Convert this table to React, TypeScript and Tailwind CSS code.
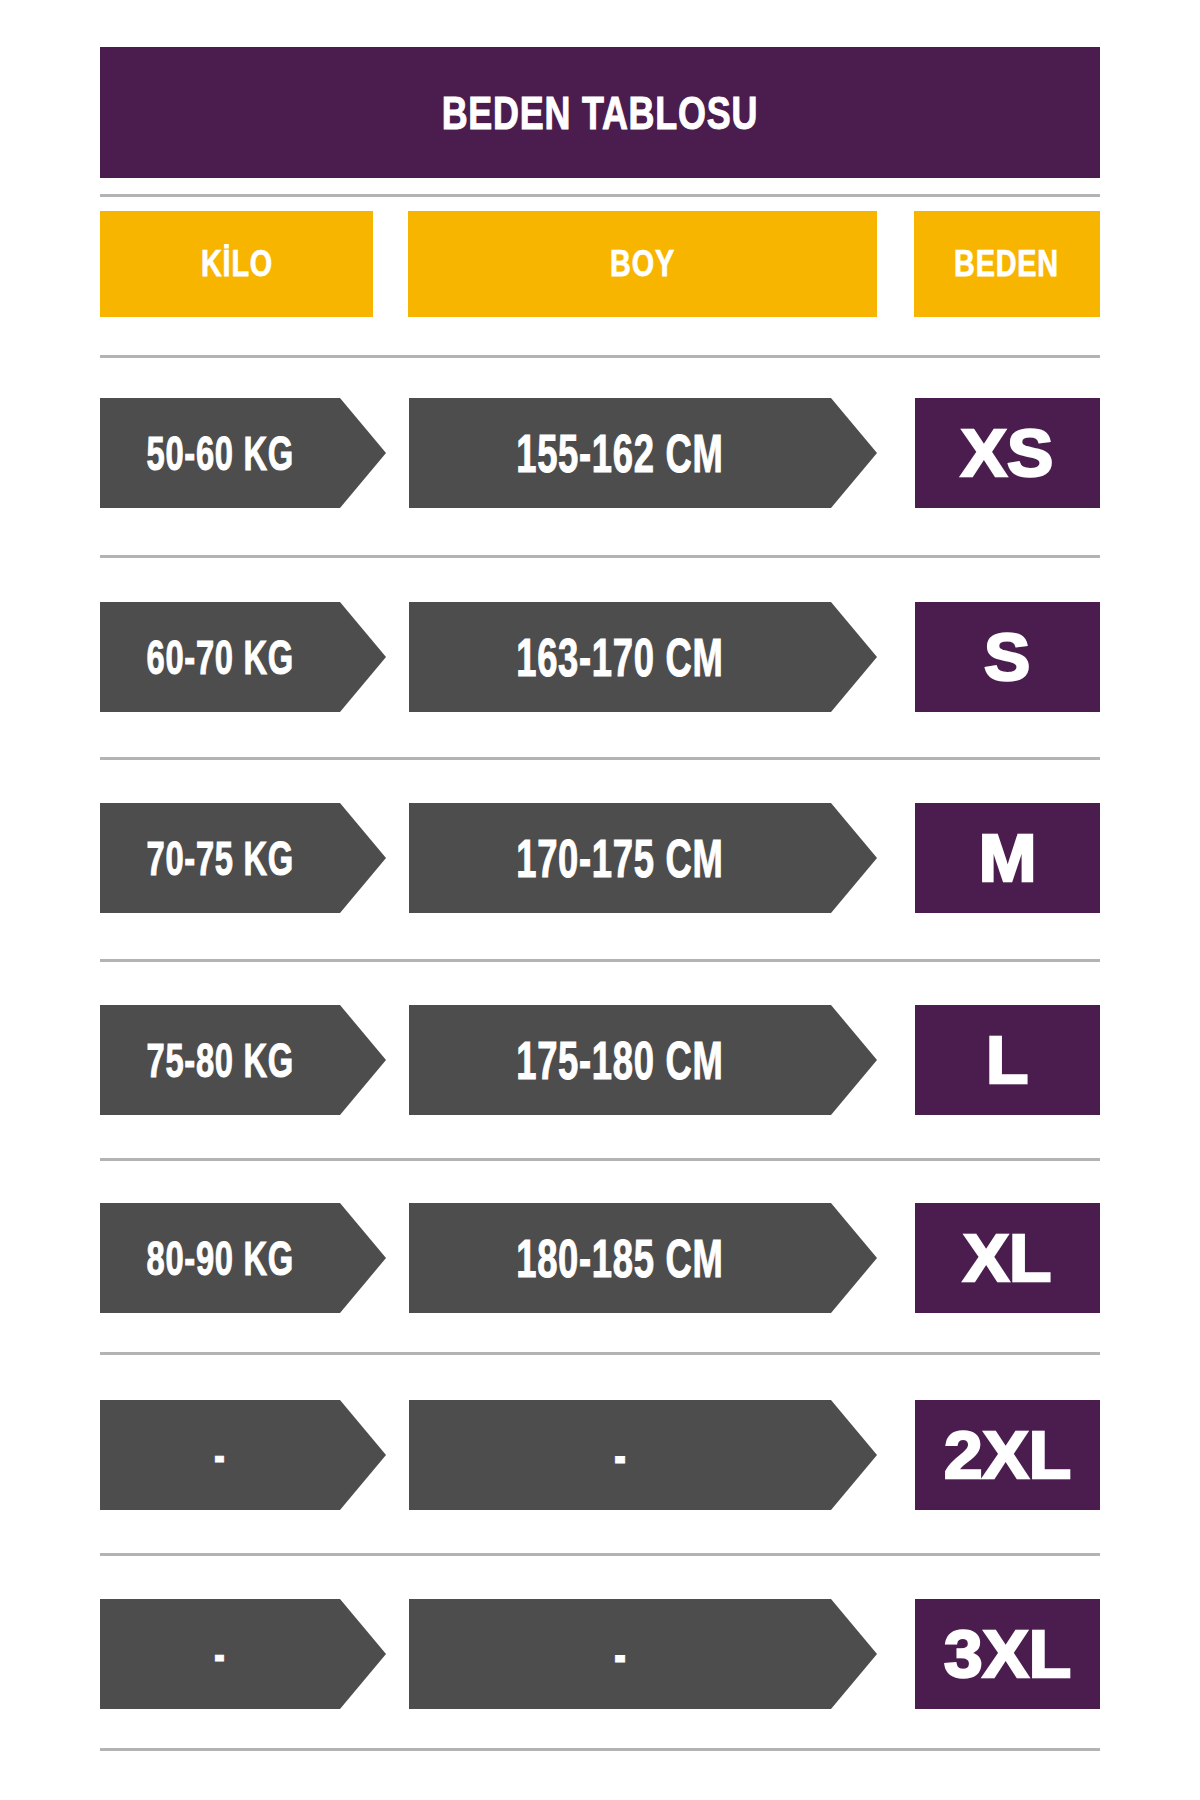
import React from "react";

const rows: [string, string, string][] = [
  ["50-60 KG", "155-162 CM", "XS"],
  ["60-70 KG", "163-170 CM", "S"],
  ["70-75 KG", "170-175 CM", "M"],
  ["75-80 KG", "175-180 CM", "L"],
  ["80-90 KG", "180-185 CM", "XL"],
  ["-", "-", "2XL"],
  ["-", "-", "3XL"],
];

const rowTop = ["mt-[40px]", "mt-[44px]", "mt-[43px]", "mt-[43px]", "mt-[42px]", "mt-[45px]", "mt-[43px]"];
const lineTop = ["mt-[47px]", "mt-[45px]", "mt-[46px]", "mt-[43px]", "mt-[39px]", "mt-[43px]", "mt-[39px]"];

function Line({ className = "" }: { className?: string }) {
  return <div className={`h-[3px] w-full bg-[#b3b3b3] ${className}`} />;
}

export default function App() {
  return (
    <div className="min-h-[1800px] bg-white font-['Liberation_Sans',Arial,sans-serif] font-bold text-white">
      <div className="mx-auto w-[1000px] pt-[47px]">
        <div className="flex h-[131px] items-center justify-center bg-[#4b1d4f]">
          <span className="inline-block scale-x-[0.78] text-[46px] leading-none tracking-[1px] [-webkit-text-stroke:1px_white]">
            BEDEN TABLOSU
          </span>
        </div>
        <Line className="mt-[16px]" />
        <div className="mt-[14px] flex h-[106px]">
          <div className="flex w-[273px] items-center justify-center bg-[#f8b500]">
            <span className="inline-block scale-x-[0.8] text-[36px] leading-none tracking-[1px] [-webkit-text-stroke:0.75px_white]">KİLO</span>
          </div>
          <div className="ml-[35px] flex w-[469px] items-center justify-center bg-[#f8b500]">
            <span className="inline-block scale-x-[0.8] text-[36px] leading-none tracking-[1px] [-webkit-text-stroke:0.75px_white]">BOY</span>
          </div>
          <div className="ml-[37px] flex w-[186px] items-center justify-center bg-[#f8b500]">
            <span className="inline-block scale-x-[0.8] text-[36px] leading-none tracking-[1px] [-webkit-text-stroke:0.75px_white]">BEDEN</span>
          </div>
        </div>
        <Line className="mt-[38px]" />
        {rows.map(([kilo, boy, size], i) => (
          <div key={i}>
            <div className={`${rowTop[i]} flex h-[110px]`}>
              <div className="flex w-[286px] items-center justify-center bg-[#4d4d4d] pr-[46px] [clip-path:polygon(0_0,240px_0,100%_50%,240px_100%,0_100%)]">
                <span className="inline-block scale-x-[0.668] text-[49px] leading-none tracking-[1px] [-webkit-text-stroke:1px_white]">
                  {kilo}
                </span>
              </div>
              <div className="ml-[23px] flex w-[468px] items-center justify-center bg-[#4d4d4d] pr-[46px] [clip-path:polygon(0_0,422px_0,100%_50%,422px_100%,0_100%)]">
                <span className="inline-block scale-x-[0.687] text-[53px] leading-none tracking-[1px] [-webkit-text-stroke:1px_white]">
                  {boy}
                </span>
              </div>
              <div className="ml-[38px] flex w-[185px] items-center justify-center bg-[#4b1d4f]">
                <span className="inline-block scale-x-[1.05] text-[66px] leading-none [-webkit-text-stroke:2.5px_white]">
                  {size}
                </span>
              </div>
            </div>
            <Line className={lineTop[i]} />
          </div>
        ))}
      </div>
    </div>
  );
}
